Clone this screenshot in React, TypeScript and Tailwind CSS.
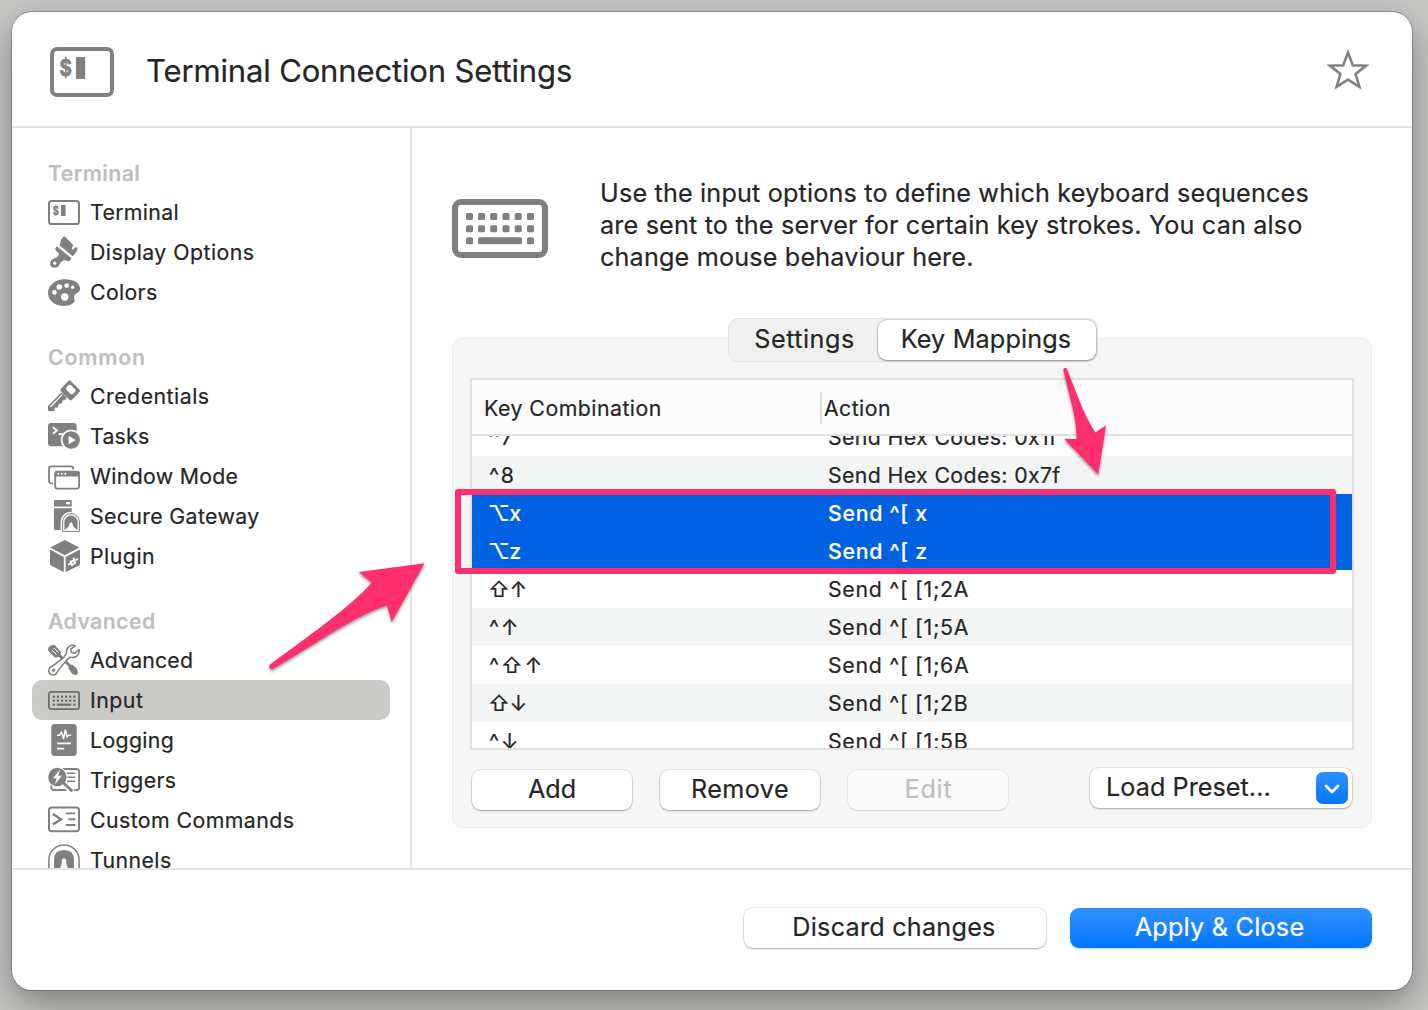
import type { ReactNode } from "react";

const G = "#808080";

function TerminalIcon({ className = "" }: { className?: string }) {
  return (
    <svg viewBox="0 0 32 25" className={className} fill="none">
      <rect x="1" y="1" width="30" height="23" rx="2.6" stroke={G} strokeWidth="2" />
      <text x="4.7" y="14.6" fill={G} stroke={G} strokeWidth="0.3" fontSize="11.5" fontWeight="700" fontFamily="Inter" textLength="6.2" lengthAdjust="spacingAndGlyphs">$</text>
      <rect x="13" y="5" width="4.6" height="11" fill={G} />
    </svg>
  );
}

function KeyboardIcon({ className = "", color = G }: { className?: string; color?: string }) {
  const xs = [14, 26, 38.2, 50.5, 62.7, 75];
  return (
    <svg viewBox="0 0 96 59" className={className}>
      <rect x="3" y="3" width="90" height="53" rx="6" fill="none" stroke={color} strokeWidth="6" />
      {[14, 26.3].map((y) => xs.map((x) => <rect key={`${x}-${y}`} x={x} y={y} width="7" height="7" rx="1.5" fill={color} />))}
      <rect x="14" y="38.3" width="7" height="7" rx="1.5" fill={color} />
      <rect x="26" y="38.3" width="44" height="7" rx="1.5" fill={color} />
      <rect x="75" y="38.3" width="7" height="7" rx="1.5" fill={color} />
    </svg>
  );
}

function Icon({ children }: { children: ReactNode }) {
  return (
    <svg viewBox="0 0 32 32" className="h-8 w-8 shrink-0" fill={G}>
      {children}
    </svg>
  );
}

const icons: Record<string, ReactNode> = {
  display: (
    <Icon>
      <path d="M11.4 9.2C12.6 8.2 12.2 5.6 13 4L15.4.8Q16.2 0 17 .7L24.8 8.4Q25.4 9.6 24 11.8Q23.6 14 25.2 13.4L27.6 11.2Q29.3 10.6 29.5 13Q29 15.8 24.8 20.2Z" />
      <path d="M9.2 10.4 23.4 22.3Q22.8 25.2 20.4 25.4Q17.4 23.9 15.3 24.4Q12.7 25.2 11.6 28.6Q9.8 32 6 31.8Q2.2 31 2 27.4Q2.4 23.6 6.2 22.4Q9.6 21.4 11 18.8Q11.4 17.2 9.4 16Q7 14.6 7.2 12.4Q7.8 10.8 9.2 10.4Z" />
      <circle cx="6.8" cy="27.2" r="1.6" fill="#fff" />
    </Icon>
  ),
  palette: (
    <Icon>
      <path d="M16.5 3.3C26 3.3 32 7 32 12.6C32 17.6 26.4 17.2 26 20.4C25.8 22.6 27.4 23.4 26.4 25.6C24.6 28.6 20.6 30 16 30C7 30 0 24.4 0 17.2C0 9 7.4 3.3 16.5 3.3Z" />
      <g fill="#fff">
        <circle cx="11.3" cy="11" r="2.8" />
        <circle cx="18.7" cy="9.6" r="2.3" />
        <circle cx="24.5" cy="11.3" r="1.8" />
        <circle cx="6.4" cy="16.4" r="2.3" />
        <circle cx="16.7" cy="21" r="3.7" />
      </g>
    </Icon>
  ),
  key: (
    <Icon>
      <path fillRule="evenodd" d="M20.2.9Q21.5-.4 22.8.9L31.4 9.5Q32.6 10.8 31.4 12.1L24.2 19.7Q22.8 21 21.5 19.7L13 11.4Q11.8 10 13 8.7ZM21 4.8 18.2 7.6V9.6L22.8 14.2H24.6L27.4 11.4V9.6L22.9 4.9Z" />
      <path d="M13.2 12.6 0 26V30Q1 31.8 3.4 31.2L6.4 31 6.8 27.8 10.2 27.2 10.6 24 13.8 23.4 14.4 20.6 17 20 18.8 17.6Z" />
      <path d="M13.8 15 2.2 27" stroke="#fff" strokeWidth="1.1" />
    </Icon>
  ),
  tasks: (
    <Icon>
      <rect y="3" width="28.7" height="23.2" rx="3" />
      <path d="M4.8 7.3 9 10.5 4.8 13.8M10.6 14.2H15" fill="none" stroke="#fff" strokeWidth="1.8" />
      <circle cx="23.2" cy="20" r="10.5" fill="#fff" />
      <circle cx="23.2" cy="20" r="8.7" />
      <path d="M20.6 15.8V24.2L27.6 20Z" fill="#fff" />
    </Icon>
  ),
  windows: (
    <Icon>
      <rect x="1" y="6.3" width="24.2" height="17" rx="2.4" fill="none" stroke={G} strokeWidth="1.8" />
      <rect x="5" y="9.4" width="28" height="22" rx="3" fill="#fff" />
      <rect x="7.2" y="11.6" width="23.9" height="17" rx="2.4" fill="#fff" stroke={G} strokeWidth="1.8" />
      <path d="M6.6 16.5V13.6Q6.8 11 9.4 11H29Q31.6 11 31.8 13.6V16.5Z" />
      <g fill="#fff">
        <circle cx="10.3" cy="13.8" r="1" />
        <circle cx="13.8" cy="13.8" r="1" />
        <circle cx="17.3" cy="13.8" r="1" />
      </g>
    </Icon>
  ),
  gateway: (
    <Icon>
      <path d="M7 0H23.7V6.4H6V1Q6 0 7 0Z" />
      <rect x="18" y="2" width="4" height="2.3" fill="#fff" />
      <path d="M6 8.2H23.7V30H7Q6 30 6 29Z" />
      <path d="M12.6 32V21.8A10 10 0 0 1 32.6 21.8V32Z" fill="#fff" />
      <path d="M14.6 31.4V22A8.4 8.4 0 0 1 31.4 22V31.4Z" fill="#fff" stroke={G} strokeWidth="1" />
      <path d="M16.4 30V22.2A6.6 6.6 0 0 1 29.6 22.2V30L25.6 27 24.2 23Q23 21.4 21.8 23L20.4 27Z" />
    </Icon>
  ),
  plugin: (
    <Icon>
      <path d="M16.7 0 31.4 7.6 16.7 15.2 2.2 7.6Z" />
      <path d="M2 9.6 15.8 17V32L3 25.6Q2 25 2 24Z" />
      <path d="M17.6 17 32 9.6V24Q32 25 31 25.6L17.6 32Z" />
      <path d="M20 24.8 22.6 23.4M27.4 20.2 30 18.8M22.4 20.6 24 26M25.4 17.6 27.4 23.6M22.4 22.2 26.2 20.2M23.6 25 27.4 22.8" fill="none" stroke="#fff" strokeWidth="1.8" />
    </Icon>
  ),
  tools: (
    <Icon>
      <path d="M.6 3.4 3.4 1.2Q5.4.2 7 1.6L13 7.8 12 12.6 7 13.8.8 7.4Q-.8 5.4.6 3.4Z" />
      <path d="M3.8 6 8.6 10.6M6 4 10.6 8.6" stroke="#fff" strokeWidth="1" />
      <path d="M11 11 23 23" stroke={G} strokeWidth="3" />
      <path d="M20 24 23.8 20.2 29 24.8 30 29.2 27.8 31.2 24.4 30Z" />
      <path d="M27.4 1.7C23 .2 17.6 3 18.4 9.4L15.8 13.4 4.4 22.2C.6 22.4 0 27.4 1.6 29.4C3.6 32 9 31.4 9.6 27.2L19 15.6 22.2 13.2C27.8 14.6 32 10.8 31 5.4L27 9.2 23.2 8.4 22.8 5.2Z" fill="#fff" stroke={G} strokeWidth="1.5" strokeLinejoin="round" />
      <circle cx="5.6" cy="26.2" r="1.6" />
    </Icon>
  ),
  input: (
    <span className="flex h-8 w-8 shrink-0 items-center pt-px">
      <svg viewBox="0 0 32 19" className="h-[19px] w-8" fill="#6c6c69">
        <rect x=".9" y=".9" width="30.2" height="17.2" rx="2.4" fill="none" stroke="#6c6c69" strokeWidth="1.8" />
        {[4.6, 8.6].map((y) => [4.7, 8.8, 12.9, 17, 21.1, 25.2].map((x) => <rect key={`${x}-${y}`} x={x} y={y} width="2.3" height="2.1" />))}
        <rect x="4.7" y="12.6" width="2.3" height="2.1" />
        <rect x="8.8" y="12.6" width="14.6" height="2.1" />
        <rect x="25.2" y="12.6" width="2.3" height="2.1" />
      </svg>
    </span>
  ),
  logging: (
    <Icon>
      <rect x="3.3" width="25.4" height="32" rx="3" />
      <path d="M9 11.3H11.6L13.4 8 15.6 14.6 17.4 6 19 13.2 20.4 11.3H23" fill="none" stroke="#fff" strokeWidth="1.5" strokeLinejoin="round" />
      <path d="M9 19.3H22.8M9 24.7H16.2" stroke="#fff" strokeWidth="1.8" />
    </Icon>
  ),
  triggers: (
    <Icon>
      <rect x="3.4" y="5" width="27.7" height="21" rx="2.6" fill="#fff" stroke={G} strokeWidth="1.8" />
      <path d="M17 9.3H27.2M19 13.2H27.2M19 17.2H27.2" stroke={G} strokeWidth="1.5" />
      <path d="M13 16.6 24.6 28" stroke="#fff" strokeWidth="6" />
      <circle cx="9.3" cy="13" r="10.2" fill="#fff" />
      <circle cx="9.3" cy="13" r="9.2" />
      <path d="M14 17.6 24.3 27.2" stroke={G} strokeWidth="2.8" />
      <path d="M12 5.6 5 14.2H8.8L6.8 20.6 14 11.8H10.2Z" fill="#fff" />
    </Icon>
  ),
  commands: (
    <Icon>
      <rect x="1" y="3.6" width="30" height="23.6" rx="2.6" fill="none" stroke={G} strokeWidth="2" />
      <path d="M4.8 10 13 15.2 4.8 20.4" fill="none" stroke={G} strokeWidth="2.4" />
      <path d="M17.7 9.4H27.4M20.3 15.2H27.4M17.7 21H27.4" stroke={G} strokeWidth="1.9" />
    </Icon>
  ),
  tunnels: (
    <Icon>
      <path d="M.9 31V16A15.1 15.1 0 0 1 31.1 16V31Z" fill="none" stroke={G} strokeWidth="1.5" />
      <path d="M4.6 31L6 24V16Q6 6 16 6T26 16V24L27.4 31H22L18.2 19V15.6Q16 13.4 13.8 15.6V19L10 31Z" />
    </Icon>
  ),
};

type Item = [icon: string, label: string, tracking: string];

const groups: { title: string; tracking: string; items: Item[] }[] = [
  {
    title: "Terminal",
    tracking: "tracking-[0.38px]",
    items: [
      ["terminal", "Terminal", "tracking-[0.34px]"],
      ["display", "Display Options", "tracking-[0.46px]"],
      ["palette", "Colors", "tracking-[0.33px]"],
    ],
  },
  {
    title: "Common",
    tracking: "tracking-[0.8px]",
    items: [
      ["key", "Credentials", "tracking-[0.49px]"],
      ["tasks", "Tasks", "tracking-[0.2px]"],
      ["windows", "Window Mode", "tracking-[0.3px]"],
      ["gateway", "Secure Gateway", "tracking-[0.35px]"],
      ["plugin", "Plugin", "tracking-[0.5px]"],
    ],
  },
  {
    title: "Advanced",
    tracking: "tracking-[0.38px]",
    items: [
      ["tools", "Advanced", "tracking-[0.15px]"],
      ["input", "Input", "tracking-[0.5px]"],
      ["logging", "Logging", "tracking-[0.35px]"],
      ["triggers", "Triggers", "tracking-[0.3px]"],
      ["commands", "Custom Commands", "tracking-[0.42px]"],
      ["tunnels", "Tunnels", "tracking-[0.4px]"],
    ],
  },
];

const mappings: [keys: string, action: string][] = [
  ["^7", "Send Hex Codes: 0x1f"],
  ["^8", "Send Hex Codes: 0x7f"],
  ["⌥x", "Send ^[ x"],
  ["⌥z", "Send ^[ z"],
  ["⇧↑", "Send ^[ [1;2A"],
  ["^↑", "Send ^[ [1;5A"],
  ["^⇧↑", "Send ^[ [1;6A"],
  ["⇧↓", "Send ^[ [1;2B"],
  ["^↓", "Send ^[ [1;5B"],
];

function Sidebar() {
  return (
    <nav className="w-[400px] shrink-0 overflow-hidden border-r-2 border-[#e5e5e5] px-5 text-[21.3px]">
      {groups.map((g) => (
        <section key={g.title} className="pt-[26px]">
          <h2 className={`flex h-[38px] items-center pl-4 pt-[2px] font-semibold text-[#bfbfbf] ${g.tracking}`}>{g.title}</h2>
          {g.items.map(([icon, label, tracking]) => (
            <div key={label} className={`flex h-10 items-center gap-[10px] rounded-[10px] pl-4 ${label === "Input" ? "bg-[#cacac6]" : ""}`}>
              {icon === "terminal" ? <TerminalIcon className="h-[25px] w-8 shrink-0" /> : icons[icon]}
              <span className={`pt-[2px] ${tracking}`}>{label}</span>
            </div>
          ))}
        </section>
      ))}
    </nav>
  );
}

const button =
  "flex h-10 items-center justify-center rounded-[9px] bg-white text-[25.2px] shadow-[0_0_0_1px_rgba(0,0,0,0.07),0_1px_2px_rgba(0,0,0,0.28)]";

function KeyTable() {
  return (
    <div className="flex h-[372px] flex-col overflow-hidden border-2 border-[#e2e2e2] bg-white text-[21.3px]">
      <div className="flex h-[56px] shrink-0 items-center border-b-2 border-[#e2e2e2] bg-[#fcfcfc]">
        <div className="w-[348px] pl-3 pt-1 tracking-[0.48px]">Key Combination</div>
        <div className="mt-[2px] h-8 w-[2px] bg-[#dcdedd]" />
        <div className="pl-[2px] pt-1 tracking-[0.43px]">Action</div>
      </div>
      <div className="min-h-0 flex-1 overflow-hidden">
        <div className="-mt-[18px]">
          {mappings.map(([keys, action], i) => {
            const selected = i === 2 || i === 3;
            const tone = selected ? "bg-[#0062e3] font-medium text-white" : i % 2 ? "bg-[#f4f5f5]" : "bg-white";
            return (
              <div key={action} className={`flex h-[38px] items-center pt-[2px] ${tone}`}>
                <div className={`w-[356px] font-[Inter,'DejaVu_Sans',sans-serif] ${keys.startsWith("^") ? "pl-[17px] tracking-[1.7px]" : "pl-4 tracking-[-0.5px]"}`}>{keys}</div>
                <div className={action.includes("Hex") ? "tracking-[0.37px]" : "tracking-[0.7px]"}>{action}</div>
              </div>
            );
          })}
        </div>
      </div>
    </div>
  );
}

function Annotations() {
  return (
    <>
      <div className="pointer-events-none absolute left-[455px] top-[489px] h-[85px] w-[881px] rounded-[3px] border-[6px] border-[#ff2f6d]" />
      <svg className="pointer-events-none absolute left-0 top-0 h-[1010px] w-[1428px] drop-shadow-[0_2px_1.5px_rgba(0,0,0,0.4)]" viewBox="0 0 1428 1010" fill="#ff2f6d">
        <path d="M424.6 563.3 358.6 572 371.8 582.6C352 606 306 638 269.8 664.8A2.8 2.8 0 0 0 272.6 669.2C308 649 352 617 387 605.3L391.7 622Z" />
        <path d="M1098.3 474.5 1064 438.8 1076.6 439C1077 418 1068 392 1063.4 370A1.8 1.8 0 0 1 1066.8 369C1076 391 1084 416 1095.3 432.4L1106 425.3Z" />
      </svg>
    </>
  );
}

export default function App() {
  return (
    <div className="relative h-[1010px] w-[1428px] overflow-hidden bg-[#c6c6c4] p-3 pr-4 font-[Inter,sans-serif] text-[#262626] [-webkit-text-stroke:0.2px_currentColor]">
      <div className="flex h-[978px] w-[1400px] flex-col overflow-hidden rounded-[20px] bg-white shadow-[0_0_0_1px_rgba(0,0,0,0.22),0_14px_36px_rgba(0,0,0,0.36)]">
        <header className="flex h-[116px] shrink-0 items-center border-b-2 border-[#e5e5e5] pl-[38px] pr-[43px]">
          <TerminalIcon className="mt-[5px] h-[50px] w-16" />
          <h1 className="ml-8 mt-[5px] text-[31px] tracking-[-0.14px]">Terminal Connection Settings</h1>
          <svg viewBox="0 0 42 42" className="ml-auto mt-[2px] h-[42px] w-[42px]" fill="none" stroke={G} strokeWidth="2.6">
            <path d="M21 3.6 25.8 16.3 38.8 16.8 28.6 25 32.4 37.8 21 30.6 9.6 37.8 13.4 25 3.2 16.8 16.2 16.3Z" />
          </svg>
        </header>

        <div className="flex h-[740px] shrink-0">
          <Sidebar />
          <main className="flex-1 px-10 pt-[49px]">
            <div className="flex items-center">
              <KeyboardIcon className="mt-[7px] h-[59px] w-24" />
              <p className="ml-[52px] whitespace-nowrap text-[25.2px] leading-8 tracking-[0.17px]">
                Use the input options to define which keyboard sequences
                <br />
                are sent to the server for certain key strokes. You can also
                <br />
                change mouse behaviour here.
              </p>
            </div>

            <div className="mt-[65px] h-[490px] w-[920px] rounded-[10px] border border-[#ebebeb] bg-[#f6f6f6] px-[17px]">
              <div className="ml-[258px] -mt-[21px] flex h-11 w-[370px] rounded-[10px] border border-[#e4e4e4] bg-[#f0f0f0] text-[25.2px]">
                <div className="flex w-[149px] items-center justify-center pb-px pl-[2px] tracking-[0.5px]">Settings</div>
                <div className="flex h-10 w-[218px] items-center justify-center self-center rounded-[9px] bg-white pr-[2px] tracking-[0.15px] shadow-[0_0_0_1px_rgba(0,0,0,0.1),0_1px_2px_rgba(0,0,0,0.35)]">
                  Key Mappings
                </div>
              </div>
              <div className="mt-4">
                <KeyTable />
              </div>
              <div className="mt-[18px] flex pl-[2px] pr-[2px]">
                <button className={`${button} mt-[2px] w-40`}>Add</button>
                <button className={`${button} ml-7 mt-[2px] w-40 tracking-[0.4px]`}>Remove</button>
                <button className="ml-7 mt-[2px] flex h-10 w-40 items-center justify-center rounded-[9px] bg-[#fafafa] pl-px text-[25.2px] tracking-[0.8px] text-[#bfbfbf] shadow-[0_0_0_1px_rgba(0,0,0,0.05),0_1px_1px_rgba(0,0,0,0.08)]">
                  Edit
                </button>
                <button className="ml-auto flex h-10 w-[262px] items-center rounded-[9px] bg-white pl-4 pr-1 text-[25.2px] tracking-[0.05px] shadow-[0_0_0_1px_rgba(0,0,0,0.07),0_1px_2px_rgba(0,0,0,0.28)]">
                  <span>Load Preset...</span>
                  <span className="ml-auto flex h-8 w-8 items-center justify-center rounded-[7px] bg-linear-to-b from-[#2d90ff] to-[#0077ff]">
                    <svg viewBox="0 0 16 10" className="mt-px h-[10px] w-4" fill="none" stroke="#fff" strokeWidth="2.8" strokeLinecap="round" strokeLinejoin="round">
                      <path d="M2 2 8 8 14 2" />
                    </svg>
                  </span>
                </button>
              </div>
            </div>
          </main>
        </div>

        <footer className="flex flex-1 justify-end gap-6 border-t-2 border-[#e5e5e5] pr-10 pt-[38px]">
          <button className={`${button} w-[302px] pr-[2px] tracking-[0.24px]`}>Discard changes</button>
          <button className="flex h-10 w-[302px] items-center justify-center rounded-[9px] bg-linear-to-b from-[#2d90ff] to-[#0077ff] pr-[3px] text-[25.2px] tracking-[0.24px] text-white shadow-[0_1px_2px_rgba(0,80,200,0.25)]">
            Apply &amp; Close
          </button>
        </footer>
      </div>
      <Annotations />
    </div>
  );
}
